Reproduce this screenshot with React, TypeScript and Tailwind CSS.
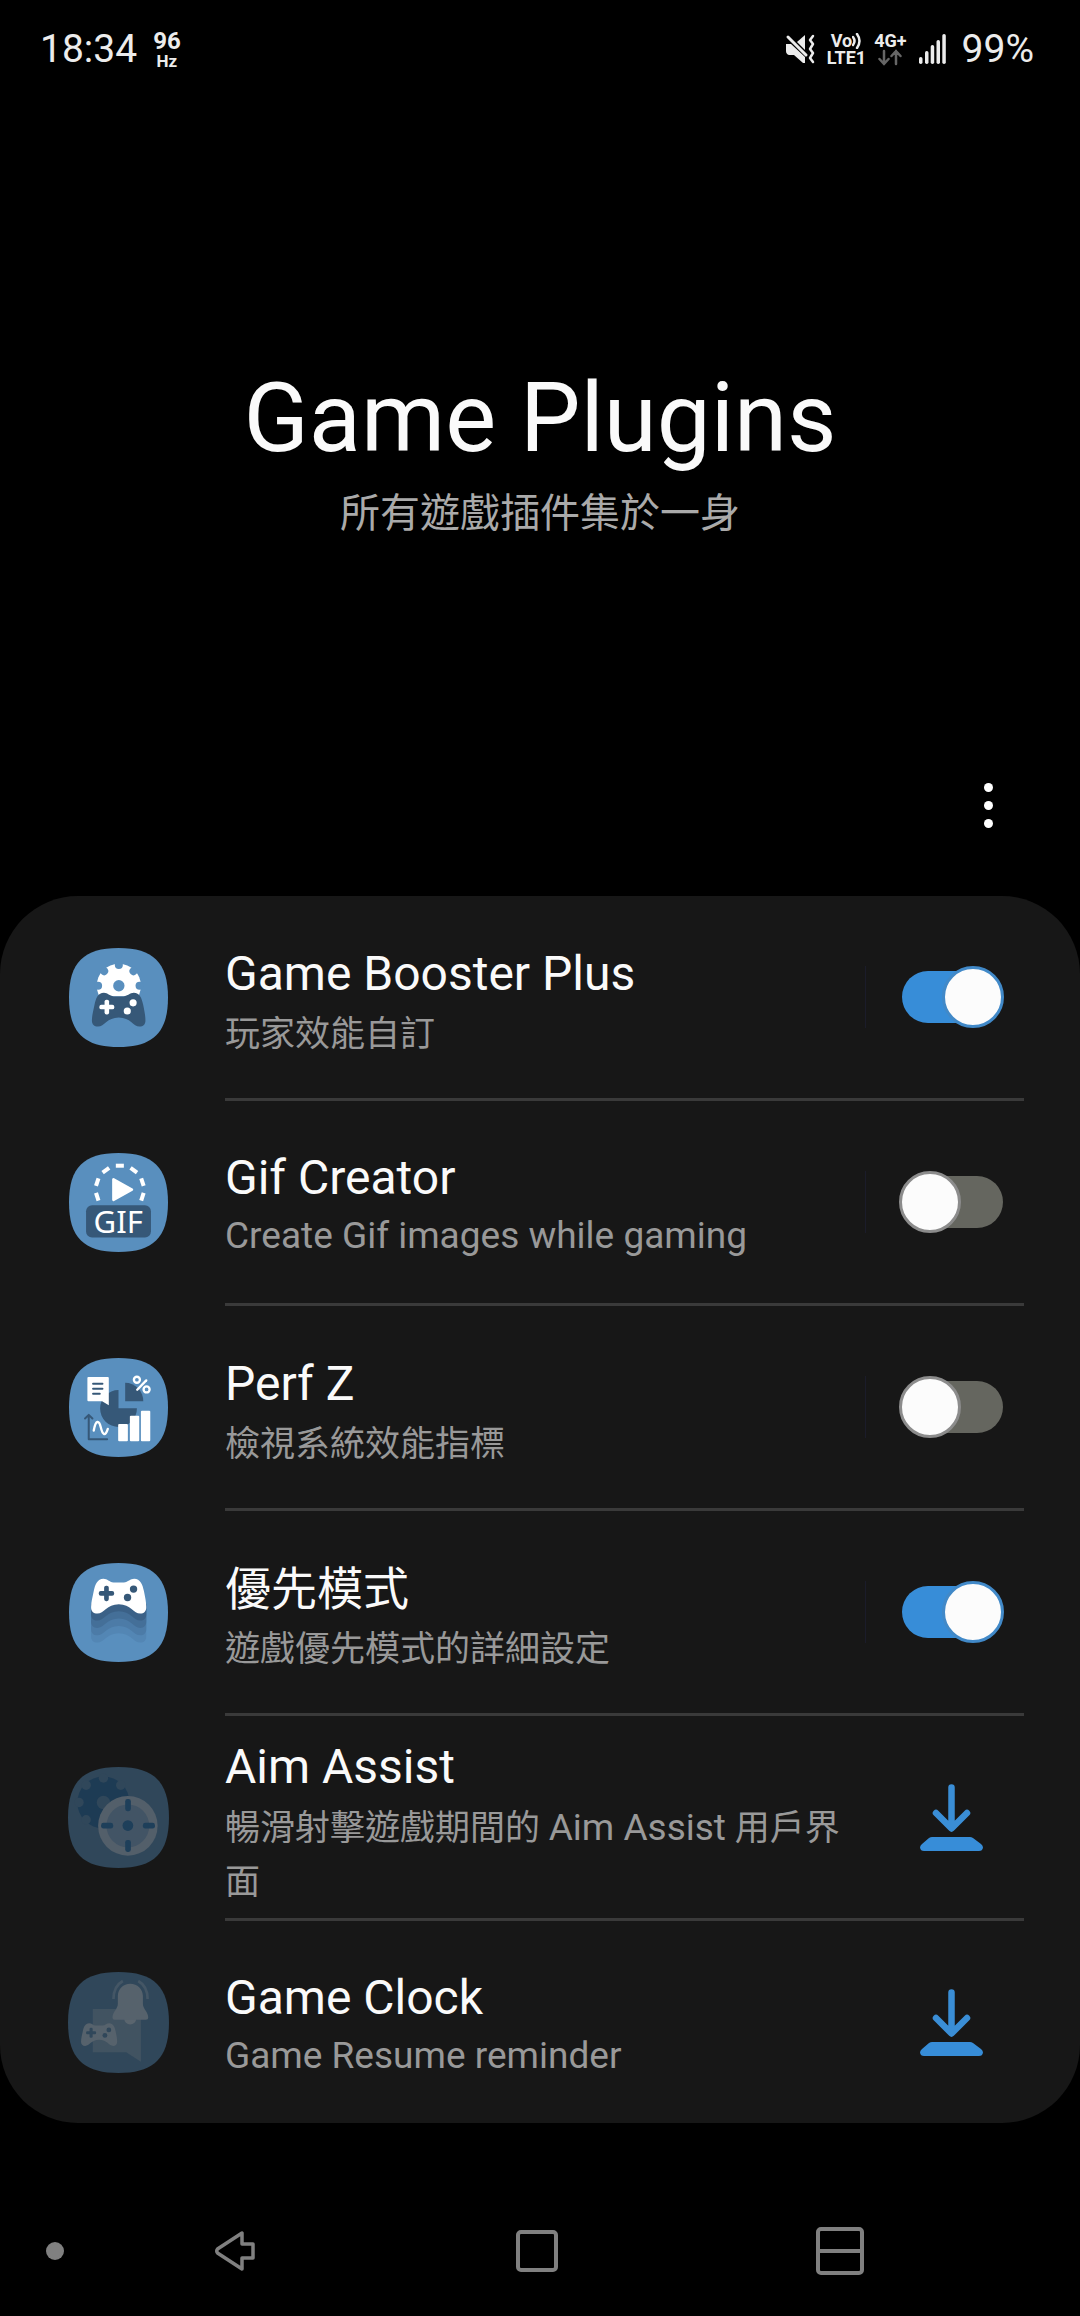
import React, { useState } from "react";

const BLUE = "#598fbe";
const NAVY = "#365878";

const CONTROLLER =
  "M160 101C172 101 177 111 190 112H221C234 111 240 101 252 101C270 101 277 118 281 138C285 158 288 172 288 186C288 198 281 205 270 205C250 205 242 177 206 177C170 177 161 205 142 205C130 205 123 198 123 186C123 172 127 158 131 138C135 118 142 101 160 101Z";

const Controller = ({ body, buttons }: { body: string; buttons: string }) => (
  <g>
    <path d={CONTROLLER} fill={body} />
    <rect x="146" y="138" width="46" height="14" rx="6" fill={buttons} />
    <rect x="162" y="122" width="14" height="46" rx="6" fill={buttons} />
    <circle cx="250" cy="132" r="11" fill={buttons} />
    <circle cx="232" cy="157" r="11" fill={buttons} />
  </g>
);

const Gear = ({ fill, back }: { fill: string; back: string }) => (
  <g>
    <circle r="66" fill={fill} />
    {[0, 45, 90, 135, 180, 225, 270, 315].map((angle) => (
      <circle key={angle} cy="-62" r="12" fill={back} transform={`rotate(${angle})`} />
    ))}
    <circle r="17" fill={back} />
  </g>
);

const Squircle = ({ fill }: { fill: string }) => (
  <path
    d="M205 54C309 54 353 98 353 202C353 306 309 350 205 350C101 350 57 306 57 202C57 98 101 54 205 54Z"
    fill={fill}
  />
);

const IconFrame = ({ children }: { children: React.ReactNode }) => (
  <svg viewBox="57 54 296 296" className="size-[99px]" aria-hidden="true">
    <Squircle fill={BLUE} />
    {children}
  </svg>
);

const FadedFrame = ({ children }: { children: React.ReactNode }) => (
  <svg viewBox="54 51 302 302" className="size-[101px]" aria-hidden="true">
    <g transform="translate(205 202) scale(1.02) translate(-205 -202)">
      <Squircle fill="#30475a" />
    </g>
    {children}
  </svg>
);

const BoosterIcon = () => (
  <IconFrame>
    <clipPath id="gearTop">
      <rect x="130" y="90" width="150" height="108" />
    </clipPath>
    <g clipPath="url(#gearTop)">
      <g transform="translate(206 167)">
        <Gear fill="#fff" back={BLUE} />
      </g>
    </g>
    <g transform="translate(206 188) scale(0.97) translate(-206 -101)">
      <Controller body={NAVY} buttons="#fff" />
    </g>
  </IconFrame>
);

const GifIcon = () => (
  <IconFrame>
    {[-108, -72, -36, 0, 36, 72, 108].map((angle) => (
      <rect
        key={angle}
        x="-12"
        y="-77"
        width="24"
        height="12"
        fill="#fff"
        transform={`translate(209 163) rotate(${angle})`}
      />
    ))}
    <path d="M190 133V194L245 163.500Z" fill="#fff" stroke="#fff" strokeWidth="8" strokeLinejoin="round" />
    <rect x="108" y="210" width="194" height="97" rx="18" fill={NAVY} />
    <text x="204" y="292" textAnchor="middle" fill="#fff" fontSize="93" fontFamily="Noto Sans, sans-serif">
      GIF
    </text>
  </IconFrame>
);

const PerfIcon = () => (
  <IconFrame>
    <path d="M205 150A55 55 0 1 0 260 204H205Z" fill={NAVY} />
    <path d="M225 128A54 54 0 0 1 279 183H225Z" fill={NAVY} />
    <path d="M115 111H173Q176 111 176 114V195L156 183H115Q112 183 112 180V114Q112 111 115 111Z" fill="#fff" />
    <path d="M129 131H157M129 146H157M129 161H149" stroke={NAVY} strokeWidth="6" strokeLinecap="round" />
    <g fill="none" stroke="#fff" strokeWidth="7" strokeLinecap="round">
      <circle cx="260" cy="119" r="9" />
      <circle cx="289" cy="148" r="9" />
      <path d="M261 149L288 121" />
      <path d="M131 271C137 237 147 240 152 261S165 292 173 266" />
    </g>
    <path
      d="M105 235L116 224L127 235M116 226V297H171"
      fill="none"
      stroke={NAVY}
      strokeWidth="6"
      strokeLinecap="round"
      strokeLinejoin="round"
    />
    <g fill="#fff">
      <rect x="204" y="251" width="29" height="52" rx="3" />
      <rect x="239" y="227" width="28" height="76" rx="3" />
      <rect x="272" y="212" width="28" height="91" rx="3" />
    </g>
  </IconFrame>
);

const TRAILS = [
  { drop: 87, fill: "#5386b4" },
  { drop: 65, fill: "#4c7ba7" },
  { drop: 43, fill: "#446f98" },
  { drop: 21, fill: "#3b6187" },
];

const PriorityIcon = () => (
  <IconFrame>
    {TRAILS.map(({ drop, fill }) => (
      <path
        key={drop}
        d={`M123 176V${186 + drop}c0 12 7 19 19 19c19 0 28 -28 64 -28c36 0 44 28 64 28c11 0 18 -7 18 -19V176Z`}
        fill={fill}
      />
    ))}
    <Controller body="#fff" buttons={NAVY} />
  </IconFrame>
);

const AimIcon = () => (
  <FadedFrame>
    <g transform="translate(160 157) scale(1.18)">
      <Gear fill="#1d3b54" back="#30475a" />
    </g>
    <circle cx="233" cy="227" r="89" fill="#535f6a" />
    <circle cx="233" cy="227" r="64" fill="#425465" />
    <g fill="#1e3f5a">
      <circle cx="233" cy="226" r="16" />
      <rect x="225" y="147" width="17" height="36" rx="7" />
      <rect x="225" y="269" width="17" height="36" rx="7" />
      <rect x="153" y="218" width="36" height="17" rx="7" />
      <rect x="278" y="218" width="36" height="17" rx="7" />
    </g>
  </FadedFrame>
);

const ClockIcon = () => (
  <FadedFrame>
    <path d="M128 162H272V319L228 291H128Z" fill="#415361" />
    <circle cx="240" cy="190" r="18" fill="#5a656e" />
    <path
      d="M240 86C262 86 277 102 278 122V146C278 162 294 170 294 187Q294 194 287 194H194Q187 194 187 187C187 170 203 162 203 146V122C204 102 219 86 240 86Z"
      fill="#56626c"
    />
    <path
      d="M190 132C190 108 200 88 218 78M292 132C292 108 282 88 264 78"
      fill="none"
      stroke="#445665"
      strokeWidth="8"
    />
    <g transform="translate(147 204) scale(0.655) translate(-205.500 -101)">
      <Controller body="#56626c" buttons="#30475a" />
    </g>
  </FadedFrame>
);

const Toggle = ({ id, initial }: { id: string; initial: boolean }) => {
  const [on, setOn] = useState(initial);
  return (
    <label className="relative flex h-[62px] w-[105px] cursor-pointer items-center">
      <input
        type="checkbox"
        role="switch"
        aria-labelledby={id}
        className="peer sr-only"
        checked={on}
        onChange={() => setOn(!on)}
      />
      <span className="ml-[3px] h-[52px] w-[101px] rounded-full bg-[#65665f] peer-checked:bg-[#378dd8]" />
      <span className="absolute left-0 size-[62px] rounded-full border-3 border-[#8c8c8c] bg-[#fcfcfc] peer-checked:right-0 peer-checked:left-auto peer-checked:border-[#4189c8]" />
    </label>
  );
};

const DownloadButton = ({ name }: { name: string }) => (
  <button type="button" aria-label={`Download ${name}`} className="cursor-pointer">
    <svg viewBox="0 0 63 67" className="h-[67px] w-[63px]" aria-hidden="true">
      <path
        d="M31.500 3.500V43M16 29L31.500 44.500L47 29"
        fill="none"
        stroke="#3a8ed6"
        strokeWidth="6.500"
        strokeLinecap="round"
        strokeLinejoin="round"
      />
      <path
        d="M12 53H50Q51.500 53 53 54L61 60Q63 61.500 63 63.500Q62.500 67 59 67H4Q0.500 67 0 63.500Q0 61.500 2 60L9 54Q10.500 53 12 53Z"
        fill="#378dd8"
      />
    </svg>
  </button>
);

// CJK glyphs look bigger than Roboto at the same size, so they get a smaller one
const TITLE_LATIN = "text-[48px] leading-[68px] text-[#fafafa]";
const TITLE_CJK = "text-[46px] leading-[68px] text-[#fafafa]";
const NOTE_LATIN = "text-[37px] leading-[48px] text-[#999]";
const NOTE_CJK = "text-[35px] leading-[54px] text-[#999]";

const aimNote = (
  <>
    暢滑射擊遊戲期間的 <span className="text-[37px]">Aim Assist</span> 用戶界
    <wbr />面
  </>
);

const plugins = [
  { id: "booster", name: "Game Booster Plus", note: "玩家效能自訂", cjkNote: true, icon: <BoosterIcon />, installed: true, on: true },
  { id: "gif", name: "Gif Creator", note: "Create Gif images while gaming", cjkNote: false, icon: <GifIcon />, installed: true, on: false },
  { id: "perf", name: "Perf Z", note: "檢視系統效能指標", cjkNote: true, icon: <PerfIcon />, installed: true, on: false },
  { id: "priority", name: "優先模式", cjkName: true, note: "遊戲優先模式的詳細設定", cjkNote: true, icon: <PriorityIcon />, installed: true, on: true },
  { id: "aim", name: "Aim Assist", note: aimNote, cjkNote: true, icon: <AimIcon />, installed: false, on: false },
  { id: "clock", name: "Game Clock", note: "Game Resume reminder", cjkNote: false, icon: <ClockIcon />, installed: false, on: false },
];

const PluginRow = ({ plugin }: { plugin: (typeof plugins)[number] }) => (
  <li className="group flex pr-14 pl-[68px]">
    <div className="flex h-[202px] w-[101px] shrink-0 items-center justify-center">{plugin.icon}</div>
    <div className="ml-14 box-content flex min-h-[202px] flex-1 items-center border-[#3a3a3a] group-not-last:border-b-3">
      <div className={plugin.cjkNote ? "flex-1 pt-2" : "flex-1"}>
        <h2 id={plugin.id} className={plugin.cjkName ? TITLE_CJK : TITLE_LATIN}>
          {plugin.name}
        </h2>
        <p className={plugin.cjkNote ? NOTE_CJK : NOTE_LATIN}>{plugin.note}</p>
      </div>
      {plugin.installed ? (
        <div className="flex w-[159px] border-l border-[#1b1c2a] pl-[33px]">
          <Toggle id={plugin.id} initial={plugin.on} />
        </div>
      ) : (
        <div className="flex w-[159px] justify-center pl-[14px]">
          <DownloadButton name={plugin.name} />
        </div>
      )}
    </div>
  </li>
);

const StatusBar = () => (
  <div className="flex h-[98px] items-center justify-between pr-[46px] pl-10 text-[#ececec]">
    <div className="flex items-center gap-4">
      <span className="text-[39px]">18:34</span>
      <div className="flex flex-col items-center font-bold">
        <span className="text-[24px] leading-[24px]">96</span>
        <span className="text-[17px] leading-[17px]">Hz</span>
      </div>
    </div>
    <div className="flex items-center">
      <svg viewBox="0 0 30 30" className="size-[30px]" aria-label="Vibrate">
        <path d="M1 10H6L20 23V29H18L9 21H4Q1 20 1 17Z" fill="currentColor" />
        <path d="M12 8L20 1V16Z" fill="currentColor" />
        <path d="M3 3L21 21" stroke="currentColor" strokeWidth="3" strokeLinecap="round" />
        <path
          d="M28 2L25 6L28 10L25 15L28 19L25 24L28 28"
          fill="none"
          stroke="currentColor"
          strokeWidth="2.500"
          strokeLinecap="round"
          strokeLinejoin="round"
        />
      </svg>
      <div className="ml-3 flex flex-col items-center text-[18px] leading-[17px] font-bold">
        <span className="flex items-center">
          Vo
          <svg viewBox="0 0 10 16" className="h-4 w-[10px]" aria-hidden="true">
            <path
              d="M1 4Q4 8 1 12M5 1Q10 8 5 15"
              fill="none"
              stroke="currentColor"
              strokeWidth="2.500"
              strokeLinecap="round"
            />
          </svg>
        </span>
        <span>LTE1</span>
      </div>
      <div className="ml-2 flex flex-col items-center text-[18px] leading-[17px] font-bold">
        <span>4G+</span>
        <svg viewBox="0 0 24 17" className="h-[17px] w-6" aria-hidden="true">
          <path
            d="M6 2V15M1.500 10L6 15L10.500 10M18 15V2M13.500 7L18 2L22.500 7"
            fill="none"
            stroke="#666"
            strokeWidth="2.500"
            strokeLinecap="round"
          />
        </svg>
      </div>
      <svg viewBox="0 0 27 30" className="ml-3 h-[30px] w-[27px]" fill="currentColor" aria-label="Signal">
        <rect x="0" y="23" width="3.500" height="7" rx="1.700" />
        <rect x="6" y="17" width="3.500" height="13" rx="1.700" />
        <rect x="11.700" y="11" width="3.500" height="19" rx="1.700" />
        <rect x="17.500" y="6" width="3.500" height="24" rx="1.700" />
        <rect x="23.300" y="0" width="3.500" height="30" rx="1.700" />
      </svg>
      <span className="ml-4 text-[39px]">99%</span>
    </div>
  </div>
);

const NavBar = () => (
  <nav className="flex h-[130px] items-center pr-[89px] text-[#808080]">
    <div className="w-[84px] pl-[46px]">
      <span className="block size-[18px] rounded-full bg-[#808080]" />
    </div>
    <button type="button" aria-label="Back" className="flex flex-1 justify-center">
      <svg viewBox="0 0 42 42" className="size-[42px]" aria-hidden="true">
        <path
          d="M28 3V14H39V28H28V39L3.500 23Q2 21 3.500 19Z"
          fill="none"
          stroke="currentColor"
          strokeWidth="3.500"
          strokeLinejoin="round"
        />
      </svg>
    </button>
    <button type="button" aria-label="Home" className="flex flex-1 justify-center">
      <span className="size-[42px] rounded-[5px] border-4 border-current" />
    </button>
    <button type="button" aria-label="Split screen" className="flex flex-1 justify-center">
      <span className="flex size-12 items-center rounded-[5px] border-4 border-current">
        <span className="h-1 w-full bg-current" />
      </span>
    </button>
  </nav>
);

const App = () => {
  return (
    <div className="flex min-h-screen flex-col bg-black font-['Roboto','Noto_Sans_CJK_TC',sans-serif]">
      <StatusBar />
      <header className="pt-[264px] text-center">
        <h1 className="text-[96px] leading-[112px] text-[#fafafa]">Game Plugins</h1>
        <p className="mt-[11px] text-[40px] leading-[58px] text-[#aaa]">所有遊戲插件集於一身</p>
      </header>
      <div className="mt-[232px] flex justify-end pr-[72px]">
        <button type="button" aria-label="More options" className="flex w-10 cursor-pointer flex-col items-center gap-[9px] py-2">
          <span className="size-[9px] rounded-full bg-white" />
          <span className="size-[9px] rounded-full bg-white" />
          <span className="size-[9px] rounded-full bg-white" />
        </button>
      </div>
      <main className="mt-[60px] rounded-[78px] bg-[#171717]">
        <ul>
          {plugins.map((plugin) => (
            <PluginRow key={plugin.id} plugin={plugin} />
          ))}
        </ul>
      </main>
      <div className="mt-auto">
        <NavBar />
      </div>
    </div>
  );
};

export default App;
